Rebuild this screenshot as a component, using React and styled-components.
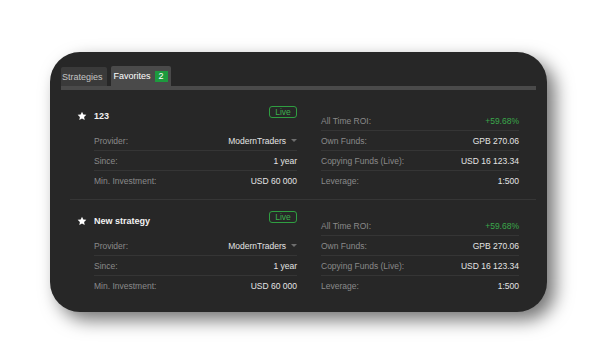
import styled, { createGlobalStyle } from "styled-components";

const GlobalStyle = createGlobalStyle`
  html, body {
    margin: 0;
    padding: 0;
    background: #ffffff;
  }
  body {
    font-family: "Liberation Sans", Arial, sans-serif;
  }
`;

const strategies = [
  {
    id: 1,
    title: "123",
    provider: "ModernTraders",
    since: "1 year",
    minInvestment: "USD 60 000",
    roi: "+59.68%",
    ownFunds: "GPB 270.06",
    copyingFunds: "USD 16 123.34",
    leverage: "1:500",
  },
  {
    id: 2,
    title: "New strategy",
    provider: "ModernTraders",
    since: "1 year",
    minInvestment: "USD 60 000",
    roi: "+59.68%",
    ownFunds: "GPB 270.06",
    copyingFunds: "USD 16 123.34",
    leverage: "1:500",
  },
];

const Star = () => (
  <svg width="10" height="10" viewBox="0 0 24 24">
    <polygon
      fill="#ffffff"
      points="12,1.5 15.1,8.3 22.5,9.1 17,14.1 18.5,21.5 12,17.7 5.5,21.5 7,14.1 1.5,9.1 8.9,8.3"
    />
  </svg>
);

const App = () => {
  return (
    <Page>
      <GlobalStyle />
      <Panel>
        <TabBar>
          <Tab>Strategies</Tab>
          <Tab active>
            Favorites <Count>2</Count>
          </Tab>
        </TabBar>
        <List>
          {strategies.map((s, index) => (
            <div key={s.id}>
              {index > 0 && <Divider />}
              <Item>
                <LeftCol>
                  <Header>
                    <Star />
                    <Title>{s.title}</Title>
                    <LiveBadge>Live</LiveBadge>
                  </Header>
                  <Row indent>
                    <Label>Provider:</Label>
                    <Value>
                      {s.provider}
                      <Caret />
                    </Value>
                  </Row>
                  <Row indent>
                    <Label>Since:</Label>
                    <Value>{s.since}</Value>
                  </Row>
                  <Row indent>
                    <Label>Min. Investment:</Label>
                    <Value>{s.minInvestment}</Value>
                  </Row>
                </LeftCol>
                <RightCol>
                  <Row>
                    <Label>All Time ROI:</Label>
                    <Value positive>{s.roi}</Value>
                  </Row>
                  <Row>
                    <Label>Own Funds:</Label>
                    <Value>{s.ownFunds}</Value>
                  </Row>
                  <Row>
                    <Label>Copying Funds (Live):</Label>
                    <Value>{s.copyingFunds}</Value>
                  </Row>
                  <Row>
                    <Label>Leverage:</Label>
                    <Value>{s.leverage}</Value>
                  </Row>
                </RightCol>
              </Item>
            </div>
          ))}
        </List>
      </Panel>
    </Page>
  );
};

const Page = styled.div`
  width: 600px;
  height: 358px;
  padding: 52px 0 0 50px;
  box-sizing: border-box;
`;

const Panel = styled.div`
  width: 497px;
  height: 260px;
  box-sizing: border-box;
  padding: 14px 11px 8px;
  background: #272727;
  border-radius: 30px;
  box-shadow: 8px 8px 18px rgba(0, 0, 0, 0.55);
`;

const TabBar = styled.div`
  display: flex;
  align-items: flex-end;
  gap: 4px;
  height: 20px;
  border-bottom: 4px solid #4a4a4a;
`;

const Tab = styled.div`
  display: flex;
  align-items: center;
  gap: 4px;
  height: ${(p) => (p.active ? "20px" : "19px")};
  padding: ${(p) => (p.active ? "0 3px 0 3px" : "0 4px 0 1px")};
  background: ${(p) => (p.active ? "#4a4a4a" : "#3a3a3a")};
  color: ${(p) => (p.active ? "#ffffff" : "#c4c4c4")};
  font-size: 9px;
  border-radius: 2px 2px 0 0;
`;

const Count = styled.span`
  display: inline-flex;
  align-items: center;
  justify-content: center;
  width: 13px;
  height: 11px;
  background: #1d9a3e;
  color: #ffffff;
  font-size: 9px;
`;

const List = styled.div`
  padding-top: 5px;
`;

const Divider = styled.div`
  height: 1px;
  margin-left: 9px;
  background: #363636;
`;

const Item = styled.div`
  display: grid;
  grid-template-columns: 220px 198px;
  column-gap: 24px;
  padding: 6px 17px 8px 16px;
`;

const LeftCol = styled.div`
  display: flex;
  flex-direction: column;
`;

const RightCol = styled.div`
  display: flex;
  flex-direction: column;
  padding-top: 10px;
`;

const Header = styled.div`
  display: flex;
  align-items: center;
  gap: 7px;
  height: 30px;
`;

const Title = styled.span`
  color: #f2f2f2;
  font-size: 9px;
  font-weight: bold;
  flex: 1;
`;

const LiveBadge = styled.span`
  align-self: flex-start;
  margin-top: 5px;
  width: 28px;
  height: 12px;
  box-sizing: border-box;
  display: flex;
  align-items: center;
  justify-content: center;
  border: 1px solid #2f9e41;
  border-radius: 3px;
  color: #3cb04e;
  font-size: 8.5px;
`;

const Row = styled.div`
  display: flex;
  align-items: center;
  justify-content: space-between;
  height: 20px;
  margin-left: ${(p) => (p.indent ? "17px" : "0")};
  border-bottom: 1px solid #353535;
  box-sizing: border-box;
  font-size: 8.5px;

  &:last-child {
    border-bottom: none;
  }
`;

const Label = styled.span`
  color: #8a8a8a;
`;

const Value = styled.span`
  display: flex;
  align-items: center;
  color: ${(p) => (p.positive ? "#3aa84b" : "#e4e4e4")};
`;

const Caret = styled.span`
  width: 0;
  height: 0;
  margin-left: 5px;
  border-left: 3px solid transparent;
  border-right: 3px solid transparent;
  border-top: 3px solid #6e6e6e;
`;

export default App;
